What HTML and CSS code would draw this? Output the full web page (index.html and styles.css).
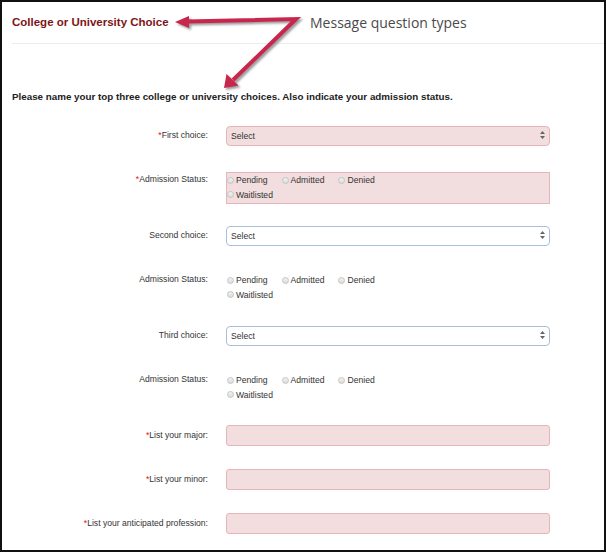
FILE: index.html
```html
<!DOCTYPE html>
<html lang="en">
<head>
    <meta charset="UTF-8">
    <meta name="viewport" content="width=device-width, initial-scale=1.0">
    <title>College or University Choice</title>
    <link rel="stylesheet" href="styles.css">
</head>
<body>
    <div class="frame">
        <div class="section-head">
            <h2 class="section-title">College or University Choice</h2>
        </div>
        <hr class="divider">
        <p class="intro">Please name your top three college or university choices. Also indicate your admission status.</p>

        <form class="question-form">
            <div class="form-row row-select">
                <label class="field-label"><span class="req">*</span>First choice:</label>
                <div class="select-wrap">
                    <select class="field-select is-required"><option>Select</option></select>
                    <svg class="select-arrow" width="5" height="8" viewBox="0 0 5 8"><path d="M2.5 0 L5 3 L0 3 Z M0 5 L5 5 L2.5 8 Z" fill="#666"/></svg>
                </div>
            </div>

            <div class="form-row row-radio">
                <label class="field-label label-top"><span class="req">*</span>Admission Status:</label>
                <div class="radio-group is-required">
                    <div class="radio-line">
                        <label class="radio-item"><input type="radio" name="status1">Pending</label>
                        <label class="radio-item"><input type="radio" name="status1">Admitted</label>
                        <label class="radio-item"><input type="radio" name="status1">Denied</label>
                    </div>
                    <div class="radio-line">
                        <label class="radio-item"><input type="radio" name="status1">Waitlisted</label>
                    </div>
                </div>
            </div>

            <div class="form-row row-select">
                <label class="field-label">Second choice:</label>
                <div class="select-wrap">
                    <select class="field-select"><option>Select</option></select>
                    <svg class="select-arrow" width="5" height="8" viewBox="0 0 5 8"><path d="M2.5 0 L5 3 L0 3 Z M0 5 L5 5 L2.5 8 Z" fill="#666"/></svg>
                </div>
            </div>

            <div class="form-row row-radio">
                <label class="field-label label-top">Admission Status:</label>
                <div class="radio-group">
                    <div class="radio-line">
                        <label class="radio-item"><input type="radio" name="status2">Pending</label>
                        <label class="radio-item"><input type="radio" name="status2">Admitted</label>
                        <label class="radio-item"><input type="radio" name="status2">Denied</label>
                    </div>
                    <div class="radio-line">
                        <label class="radio-item"><input type="radio" name="status2">Waitlisted</label>
                    </div>
                </div>
            </div>

            <div class="form-row row-select">
                <label class="field-label">Third choice:</label>
                <div class="select-wrap">
                    <select class="field-select"><option>Select</option></select>
                    <svg class="select-arrow" width="5" height="8" viewBox="0 0 5 8"><path d="M2.5 0 L5 3 L0 3 Z M0 5 L5 5 L2.5 8 Z" fill="#666"/></svg>
                </div>
            </div>

            <div class="form-row row-radio">
                <label class="field-label label-top">Admission Status:</label>
                <div class="radio-group">
                    <div class="radio-line">
                        <label class="radio-item"><input type="radio" name="status3">Pending</label>
                        <label class="radio-item"><input type="radio" name="status3">Admitted</label>
                        <label class="radio-item"><input type="radio" name="status3">Denied</label>
                    </div>
                    <div class="radio-line">
                        <label class="radio-item"><input type="radio" name="status3">Waitlisted</label>
                    </div>
                </div>
            </div>

            <div class="form-row row-input">
                <label class="field-label"><span class="req">*</span>List your major:</label>
                <input type="text" class="field-input is-required">
            </div>

            <div class="form-row row-input">
                <label class="field-label"><span class="req">*</span>List your minor:</label>
                <input type="text" class="field-input is-required">
            </div>

            <div class="form-row row-input">
                <label class="field-label"><span class="req">*</span>List your anticipated profession:</label>
                <input type="text" class="field-input is-required">
            </div>
        </form>

        <!-- annotation callout drawn over the screenshot -->
        <span class="callout-text">Message question types</span>
        <svg class="callout-arrows" width="606" height="110" viewBox="0 0 606 110">
            <defs>
                <filter id="soft" x="-10%" y="-10%" width="120%" height="120%">
                    <feGaussianBlur stdDeviation="1"/>
                </filter>
            </defs>
            <g transform="translate(2 2)" filter="url(#soft)" fill="#7a7a7a" stroke="#7a7a7a" opacity="0.75">
                <polyline points="186,21.5 296,19 233,80" fill="none" stroke-width="4" stroke-linejoin="miter"/>
                <polygon points="175,22 189,16 189,28" stroke="none"/>
                <polygon points="224,88 226.5,74 238.5,85.5" stroke="none"/>
            </g>
            <g fill="#c8264c" stroke="#c8264c">
                <polyline points="186,21.5 296,19 233,80" fill="none" stroke-width="4" stroke-linejoin="miter"/>
                <polygon points="175,22 189,16 189,28" stroke="none"/>
                <polygon points="224,88 226.5,74 238.5,85.5" stroke="none"/>
            </g>
        </svg>
    </div>
</body>
</html>
```

FILE: styles.css
```css
html, body {
    margin: 0;
    padding: 0;
    background: white;
}
.frame {
    position: relative;
    box-sizing: border-box;
    width: 606px;
    height: 552px;
    border: 2px solid #111;
    padding: 0 0 0 10px;
    font-family: "Liberation Sans", Arial, sans-serif;
    color: #333;
    overflow: hidden;
}
.section-head {
    padding-top: 13px;
}
.section-title {
    margin: 0;
    font-size: 11.5px;
    line-height: 14px;
    font-weight: bold;
    color: #7d1517;
}
.divider {
    margin: 14px 0 0 0;
    border: none;
    border-top: 1px solid #ececec;
    height: 0;
}
.intro {
    margin: 47px 0 0 0;
    font-size: 9.8px;
    line-height: 12px;
    font-weight: bold;
    color: #222;
}
.question-form {
    margin-top: 22px;
}
.form-row {
    display: grid;
    grid-template-columns: 196px 324px;
    column-gap: 18px;
    align-items: center;
}
.row-select {
    height: 20px;
    margin-bottom: 27px;
}
.row-radio {
    height: 32px;
    margin-bottom: 21px;
    align-items: start;
}
.row-input {
    height: 21px;
    margin-bottom: 23px;
}
.field-label {
    text-align: right;
    font-size: 8.6px;
    line-height: 15px;
    color: #333;
}
.label-top {
    padding-top: 0;
}
.req {
    color: #e01010;
}
.select-wrap {
    position: relative;
    height: 20px;
}
.field-select {
    -webkit-appearance: none;
    appearance: none;
    box-sizing: border-box;
    width: 100%;
    height: 20px;
    margin: 0;
    padding: 0 4px;
    border: 1px solid #a8c0dc;
    border-radius: 4px;
    background: white;
    font-family: "Liberation Sans", Arial, sans-serif;
    font-size: 8.6px;
    color: #333;
}
.select-arrow {
    position: absolute;
    right: 5px;
    top: 6px;
}
.field-input {
    box-sizing: border-box;
    width: 100%;
    height: 21px;
    margin: 0;
    padding: 0 4px;
    border: 1px solid #e6b4bb;
    border-radius: 3px;
    background: #f2dede;
}
.is-required.field-select {
    background: #f2dede;
    border-color: #e6b4bb;
}
.radio-group {
    box-sizing: border-box;
    height: 32px;
    border: 1px solid transparent;
    padding-top: 0;
}
.radio-group.is-required {
    background: #f2dede;
    border-color: #e6b4bb;
}
.radio-line {
    display: flex;
    column-gap: 14px;
    height: 14.5px;
    align-items: center;
}
.radio-item {
    display: flex;
    align-items: center;
    font-size: 8.6px;
    color: #333;
}
.radio-item input {
    -webkit-appearance: none;
    appearance: none;
    width: 7px;
    height: 7px;
    margin: 0 2px 0 0;
    border: 1px solid #c4c4c4;
    border-radius: 50%;
    background: linear-gradient(#f2f2f2, #dcdcdc);
    box-sizing: border-box;
}
.callout-text {
    position: absolute;
    left: 308px;
    top: 12px;
    font-family: "Open Sans", sans-serif;
    font-size: 14px;
    line-height: 18px;
    color: #4a4a4a;
}
.callout-arrows {
    position: absolute;
    left: -2px;
    top: -2px;
    pointer-events: none;
}
```
